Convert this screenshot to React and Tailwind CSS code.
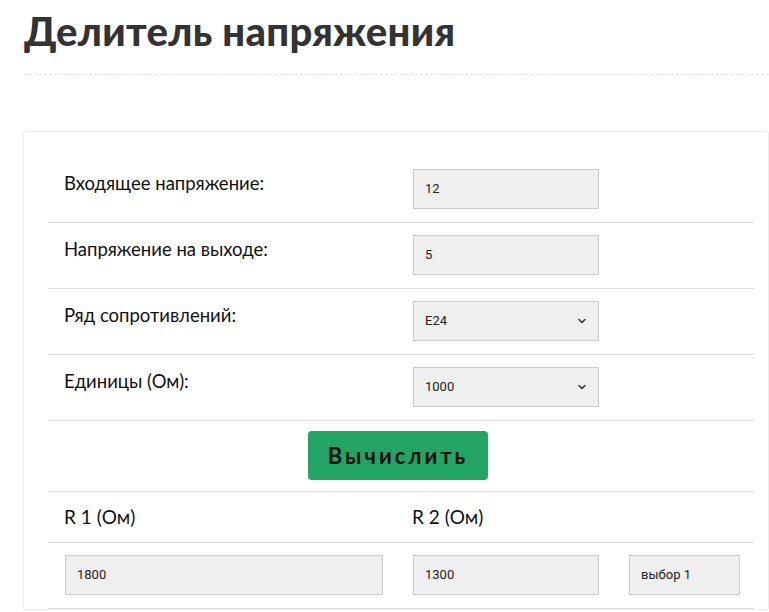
import React from "react";

const inputCls =
  "h-[40px] bg-[#efefef] border border-[#cccccc] px-[11px] text-[13px] text-[#222] flex items-center font-['Roboto',sans-serif]";

function Chevron() {
  return (
    <svg width="10" height="10" viewBox="0 0 10 10" className="ml-auto">
      <path d="M2 3.5 L5 6.5 L8 3.5" fill="none" stroke="#333" strokeWidth="1.5" strokeLinecap="round" strokeLinejoin="round" />
    </svg>
  );
}

export default function App() {
  const rows = [
    { label: "Входящее напряжение:", value: "12" },
    { label: "Напряжение на выходе:", value: "5" },
    { label: "Ряд сопротивлений:", value: "E24", select: true },
    { label: "Единицы (Ом):", value: "1000", select: true },
  ];
  return (
    <div className="w-[769px] h-[612px] overflow-hidden bg-white font-['Lato',sans-serif] text-[#222]">
      <div className="pl-[24px] pt-[6px]">
        <h1 className="text-[40px] leading-[50px] font-black text-[#333] tracking-[0.3px]">Делитель напряжения</h1>
        <div className="mt-[18px] border-t border-dashed border-[#e2e2e2]"></div>
      </div>
      <div className="ml-[23px] mt-[56px] border border-[#eeeeee] rounded-[2px] pt-[25px] pl-[24px] pr-[15px]">
        <div className="w-[706px]">
          {rows.map((r) => (
            <div key={r.label} className="flex border-b border-[#dddddd] h-[66px]">
              <div className="w-[349px] pl-[16px] pt-[11px] text-[18.5px] leading-[30px] text-[#111]">{r.label}</div>
              <div className="pl-[16px] pt-[12px]">
                <div className={inputCls + " w-[186px]"}>
                  <span>{r.value}</span>
                  {r.select && <Chevron />}
                </div>
              </div>
            </div>
          ))}
          <div className="flex justify-center border-b border-[#dddddd] h-[71px] pt-[10px]">
            <button className="h-[49px] w-[180px] bg-[#21a464] rounded-[4px] text-[22px] font-bold tracking-[3px] text-[#111] ml-[-6px]">
              Вычислить
            </button>
          </div>
          <div className="flex border-b border-[#dddddd] h-[51px] items-center text-[19px] text-[#111]">
            <div className="w-[349px] pl-[16px]">R 1 (Ом)</div>
            <div className="pl-[15px]">R 2 (Ом)</div>
          </div>
          <div className="flex border-b border-[#dddddd] h-[66px] pt-[12px]">
            <div className="w-[349px] pl-[17px]">
              <div className={inputCls + " w-[318px]"}>1800</div>
            </div>
            <div className="pl-[16px]">
              <div className={inputCls + " w-[186px]"}>1300</div>
            </div>
            <div className="pl-[30px]">
              <div className={inputCls + " w-[111px] font-['DejaVu_Sans',sans-serif] text-[12px]"}>выбор 1</div>
            </div>
          </div>
        </div>
      </div>
    </div>
  );
}
